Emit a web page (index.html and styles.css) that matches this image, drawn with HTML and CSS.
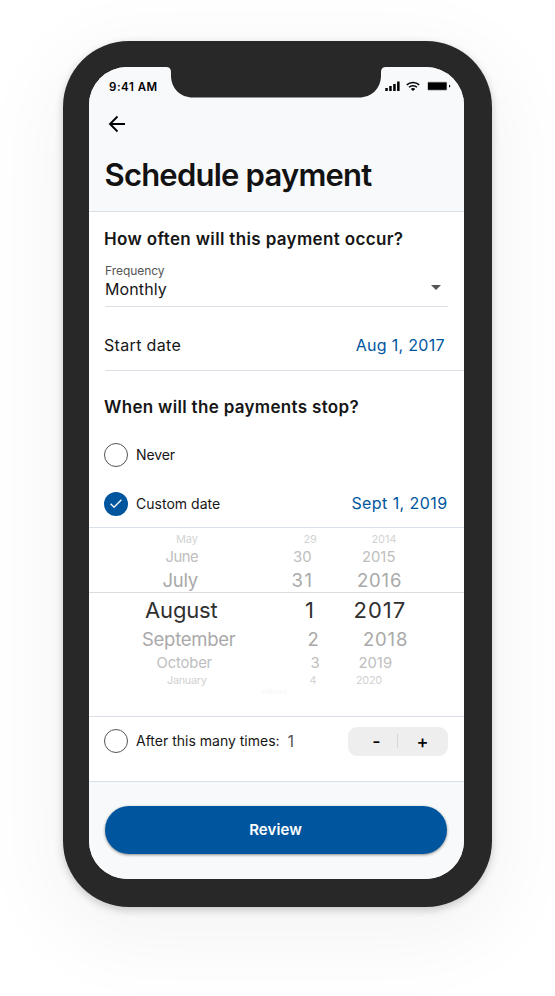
FILE: index.html
```html
<!DOCTYPE html>
<html lang="en">
<head>
<meta charset="utf-8">
<title>Schedule payment</title>
<link rel="stylesheet" href="styles.css">
</head>
<body>
<div class="phone">
  <div class="screen">
    <svg class="notch" width="220" height="31" viewBox="0 0 220 31" aria-hidden="true"><path d="M0 0h220q-5 0-5 5v3.500c0 13-9.500 22-22 22H27c-12.500 0-22-9-22-22V5q0-5-5-5z" fill="#282828"/></svg>
    <header class="header">
      <div class="status">
        <span class="time">9:41 AM</span>
        <span class="indicators">
          <svg width="16" height="10" viewBox="0 0 16 10"><path d="M.3 7h2.500v3H.3zM4.200 5h2.500v5H4.200zM8.200 3h2.500v7H8.200zM12.100.5h2.500V10h-2.500z"/></svg>
          <svg class="wifi" width="14" height="10" viewBox="0 0 14 10"><g fill="none" stroke="#000" stroke-width="1.500"><path d="M.8 3.900C4.200.7 9.800.7 13.200 3.900"/><path d="M3 6.200C5.200 4.100 8.800 4.100 11 6.200"/></g><path d="M7 9.900L4.800 7.900c1.200-1.150 3.200-1.150 4.400 0z"/></svg>
          <svg width="24" height="10" viewBox="0 0 24 10"><rect x=".5" y=".8" width="19.600" height="8.600" rx="1.200" fill="#999"/><rect x="1" y="1.500" width="18.500" height="7.200" rx=".6"/><path d="M22 3.700q1.300.3 1.300 1.400T22 6.500z"/></svg>
        </span>
      </div>
      <button class="back" aria-label="Back"><svg width="18" height="18" viewBox="0 0 18 18" fill="none" stroke="#000" stroke-width="1.900"><path d="M17 9H2.500M9.500 1.500L2 9l7.500 7.500"/></svg></button>
      <h1>Schedule payment</h1>
    </header>
    <main>
      <h2 class="q1">How often will this payment occur?</h2>
      <div class="field">
        <div>
          <div class="label">Frequency</div>
          <div class="value">Monthly</div>
        </div>
        <svg class="caret" width="10" height="5" viewBox="0 0 10 5"><path d="M0 0h10L5 5z" fill="#555"/></svg>
      </div>
      <div class="start"><span class="start-label">Start date</span><a class="start-date">Aug 1, 2017</a></div>
      <h2 class="q2">When will the payments stop?</h2>
      <div class="option never"><span class="radio"></span><span>Never</span></div>
      <div class="option custom">
        <span class="radio checked"><svg width="12" height="9" viewBox="0 0 12 9" fill="none" stroke="#fff" stroke-width="1.300"><path d="M.6 4.800L4 8.200 11.400.7"/></svg></span>
        <span class="custom-label">Custom date</span><a class="end-date">Sept 1, 2019</a>
      </div>
      <div class="picker">
        <div class="wheel far-up"><span>May</span><span>29</span><span>2014</span></div>
        <div class="wheel mid-up"><span>June</span><span>30</span><span>2015</span></div>
        <div class="wheel near-up"><span>July</span><span>31</span><span>2016</span></div>
        <div class="wheel current"><span>August</span><span>1</span><span>2017</span></div>
        <div class="wheel near-down"><span>September</span><span>2</span><span>2018</span></div>
        <div class="wheel mid-down"><span>October</span><span>3</span><span>2019</span></div>
        <div class="wheel far-down"><span>January</span><span>4</span><span>2020</span></div>
        <div class="vanishing">February</div>
      </div>
      <div class="option times">
        <span class="radio"></span><span>After this many times:</span><span class="count">1</span>
        <div class="stepper"><button>-</button><i></i><button>+</button></div>
      </div>
    </main>
    <footer><button class="review">Review</button></footer>
  </div>
</div>
</body>
</html>
```
FILE: styles.css
```css
* { box-sizing: border-box; }
body {
  margin: 0;
  height: 996px;
  overflow: hidden;
  background: #fff;
  font-family: Inter, sans-serif;
  font-size: 14px;
  color: #161616;
  padding: 41px 63px 0;
}
button { border: 0; background: none; padding: 0; margin: 0; font-family: inherit; color: inherit; }
svg { display: block; }
h1, h2 { margin: 0; }
.phone {
  width: 429px;
  height: 866px;
  padding: 26px 28px 28px 26px;
  border-radius: 66px;
  background: #282828;
  box-shadow: 0 3px 9px rgba(0,0,0,.2), 0 22px 80px 16px rgba(0,0,0,.045);
}
.screen {
  position: relative;
  width: 375px;
  height: 812px;
  border-radius: 38px;
  overflow: hidden;
  background: #fff;
}
.notch { position: absolute; left: 77px; top: 0; }
.header {
  height: 145px;
  background: #f8f9fb;
  border-bottom: 1px solid #d9e0e8;
  padding-left: 16px;
}
.status { display: flex; justify-content: space-between; height: 39px; padding: 0 13px 0 4px; align-items: center; }
.time { font-size: 11.500px; font-weight: 600; letter-spacing: .53px; color: #000; }
.indicators { display: flex; align-items: center; gap: 5px; margin-top: -1px; }
.wifi { margin-left: 0; margin-right: 2px; }
.back { display: block; margin: 9px 0 0 3px; height: 18px; }
h1 { font-size: 31px; font-weight: 600; letter-spacing: -.78px; line-height: 38px; margin: 23px 0 0 -.5px; color: #121212; }
h2 { font-size: 17px; font-weight: 600; letter-spacing: .35px; padding-left: 15px; }
.q1 { height: 54px; line-height: 54px; }
.field { display: flex; justify-content: space-between; margin: 0 16px; height: 41px; border-bottom: 1px solid #d9e0e8; }
.label { font-size: 12px; line-height: 12px; letter-spacing: -.05px; color: #555; margin-top: -1px; }
.value { font-size: 16px; line-height: 20px; letter-spacing: .1px; margin-top: 2px; }
.caret { margin: 19px 7px 0 0; }
.start { height: 64px; margin-left: 16px; border-bottom: 1px solid #d9e0e8; display: flex; justify-content: space-between; padding: 28px 19px 0 0; font-size: 16px; line-height: 20px; }
.start-label { letter-spacing: .34px; margin-left: -1px; }
.start-date { letter-spacing: .32px; }
.start-date, .end-date { color: #00569e; }
.q2 { height: 60px; line-height: 20px; padding-top: 26px; letter-spacing: .32px; }
.option { display: flex; align-items: center; padding: 0 16px 0 15px; }
.radio { width: 24px; height: 24px; border: 1px solid #555; border-radius: 50%; margin-right: 8px; flex: none; }
.checked { background: #00569e; border: 0; display: flex; align-items: center; justify-content: center; }
.never { height: 48px; padding-bottom: 1px; letter-spacing: -.12px; }
.never .radio { margin-top: 1px; }
.custom { height: 49px; border-bottom: 1px solid #d9e0e8; }
.custom .radio { margin-top: 1px; }
.custom-label { letter-spacing: .02px; }
.end-date { margin-left: auto; margin-right: .5px; font-size: 16px; letter-spacing: .42px; }
.picker { height: 189px; border-bottom: 1px solid #d9e0e8; padding-top: 3px; color: #a9a9a9; }
.wheel { display: grid; align-items: center; white-space: nowrap; }
.far-up { height: 16px; font-size: 11px; color: #d3d3d3; padding-left: 87px; grid-template-columns: 127.500px 68px auto; letter-spacing: -.1px; }
.mid-up { height: 20px; font-size: 14.800px; color: #bebebe; padding-left: 76.500px; grid-template-columns: 127.500px 69px auto; }
.near-up { height: 26px; font-size: 18.500px; border-bottom: 1px solid #dcdcdc; padding-left: 73.500px; grid-template-columns: 129px 65.500px auto; }
.current { height: 33px; font-size: 22px; color: #303030; padding-left: 56px; grid-template-columns: 160px 48.500px auto; }
.near-down { height: 25px; font-size: 18.500px; padding-left: 53px; grid-template-columns: 165.500px 55.500px auto; }
.mid-down { height: 22px; padding-top: 1px; font-size: 14.800px; color: #bebebe; padding-left: 67.500px; grid-template-columns: 154px 48px auto; }
.far-down { height: 14px; padding-top: 1px; font-size: 10.800px; color: #d0d0d0; padding-left: 78px; grid-template-columns: 142.500px 46.500px auto; letter-spacing: -.25px; }
.near-up span:first-child, .near-down span:first-child { letter-spacing: -.28px; }
.near-up span:last-child, .near-down span:last-child { letter-spacing: .8px; }
.mid-up span:first-child { letter-spacing: -.5px; }
.mid-down span:first-child { letter-spacing: -.15px; }
.current span:first-child { letter-spacing: -.15px; }
.current span:last-child { letter-spacing: 1px; }
.near-up span:nth-child(2) { letter-spacing: 1.500px; }
.vanishing { font-size: 6px; line-height: 8px; margin: 1px 0 0 173px; color: #f5f5f5; }
.times { height: 48px; }
.times > span:nth-child(2) { margin-top: -1px; }
.count { font-size: 16px; color: #555; margin-left: 8px; }
.stepper { margin-left: auto; width: 100px; height: 29px; border-radius: 9px; background: #eee; display: flex; align-items: center; }
.stepper button { flex: none; width: 49px; font-size: 18px; font-weight: 500; color: #000; line-height: 29px; }
.stepper button:first-child { padding-left: 8px; }
.stepper i { width: 1px; height: 14px; background: #d6d6d6; }
main { height: 570px; border-bottom: 1px solid #d9e0e8; }
.screen footer { height: 97px; background: #f8f9fb; padding: 24px 17.500px 0 15.500px; }
.review { display: block; width: 100%; height: 48px; padding-bottom: 1px; border-radius: 24px; background: #00569e; color: #fff; font-size: 15px; font-weight: 600; letter-spacing: .1px; box-shadow: 0 1px 3px rgba(0,0,0,.45); }
```
